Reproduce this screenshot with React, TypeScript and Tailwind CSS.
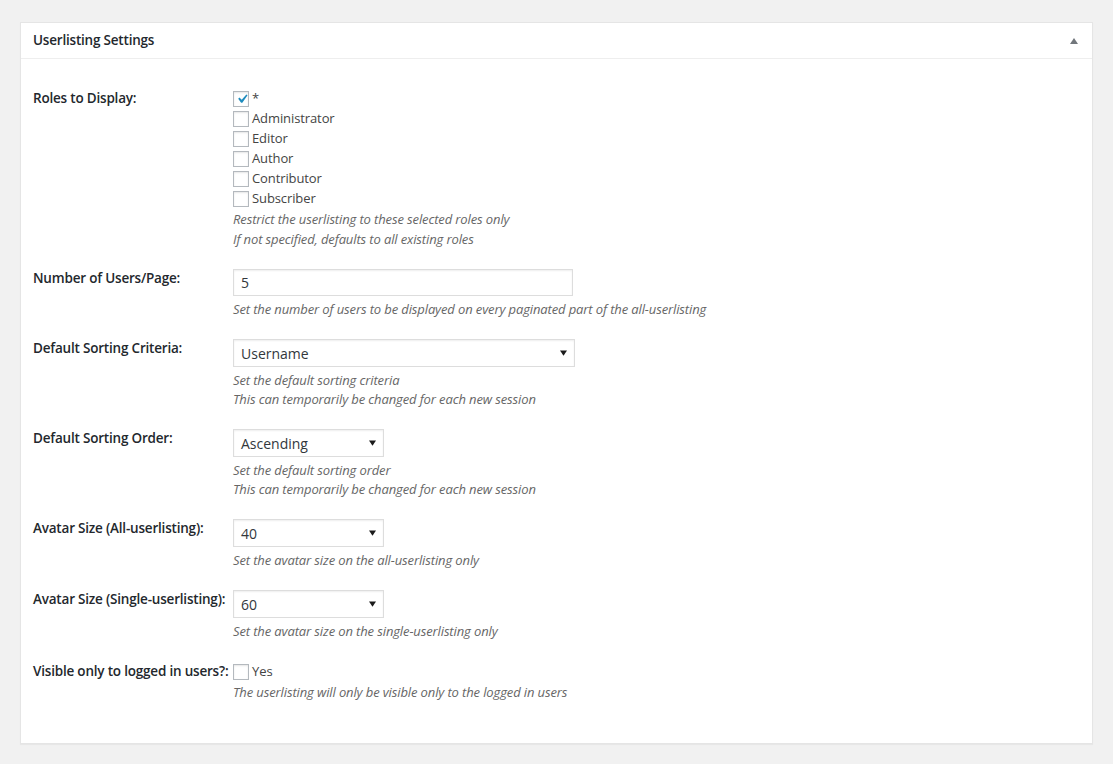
const font = { fontFamily: '"Open Sans", "Noto Sans", sans-serif' };

function Checkbox({ checked = false }: { checked?: boolean }) {
  return (
    <span className="relative inline-flex h-4 w-4 shrink-0 items-center justify-center border border-[#b4b9be] bg-white shadow-[inset_0_1px_2px_rgba(0,0,0,0.1)]">
      {checked && (
        <svg viewBox="0 0 20 20" className="absolute -left-[1px] -top-[2px] h-[18px] w-[18px]">
          <path d="M14.83 4.89l1.34.94-5.81 8.38H9.02L5.78 9.67l1.34-1.25 2.57 2.4z" fill="#1e8cbe" />
        </svg>
      )}
    </span>
  );
}

function Select({ value, wide = false }: { value: string; wide?: boolean }) {
  return (
    <div
      className={`flex h-[28px] items-center justify-between border border-[#ddd] bg-white pl-[7px] pr-[7px] text-[14px] text-[#32373c] shadow-[inset_0_1px_2px_rgba(0,0,0,0.07)] ${
        wide ? 'w-[342px]' : 'w-[151px]'
      }`}
    >
      <span>{value}</span>
      <svg viewBox="0 0 8 6" className="h-[6px] w-[7px]">
        <path d="M0 0h8L4 6z" fill="#1b1b1b" />
      </svg>
    </div>
  );
}

function Desc({ children, tall = false }: { children: React.ReactNode; tall?: boolean }) {
  return (
    <p className={`text-[13px] italic tracking-[-0.12px] text-[#666] ${tall ? 'leading-[20px]' : 'leading-[19px]'}`}>
      {children}
    </p>
  );
}

function Row({ label, children, pad = 'pt-[20px]' }: { label: string; children: React.ReactNode; pad?: string }) {
  return (
    <div className={`flex ${pad}`}>
      <div className="w-[200px] shrink-0 -mt-[1px] text-[13.5px] font-semibold leading-[20px] tracking-[-0.2px] text-[#23282d]">
        {label}
      </div>
      <div className="flex flex-col">{children}</div>
    </div>
  );
}

const roles = ['Administrator', 'Editor', 'Author', 'Contributor', 'Subscriber'];

export default function App() {
  return (
    <div className="min-h-[764px] bg-[#f1f1f1] pl-[20px] pr-[20px] pt-[22px]" style={font}>
      <div className="border border-[#e5e5e5] bg-white shadow-[0_1px_1px_rgba(0,0,0,0.04)]">
        <div className="flex h-[36px] items-center justify-between border-b border-[#eee] pl-[12px] pr-[12px]">
          <h2 className="text-[13.5px] font-semibold tracking-[-0.2px] text-[#23282d]">Userlisting Settings</h2>
          <svg viewBox="0 0 8 6" className="mr-[2px] h-[6px] w-[8px]">
            <path d="M4 0l4 6H0z" fill="#72777c" />
          </svg>
        </div>
        <div className="pb-[41px] pl-[12px] pr-[12px] text-[13px] text-[#444]">
          <Row label="Roles to Display:" pad="pt-[30px]">
            <label className="flex h-[20px] items-center gap-[3px]">
              <Checkbox checked />
              <span className="text-[13px] text-[#444]">*</span>
            </label>
            {roles.map((r) => (
              <label key={r} className="flex h-[20px] items-center gap-[3px]">
                <Checkbox />
                <span className="text-[13px] tracking-[-0.1px] text-[#444]">{r}</span>
              </label>
            ))}
            <Desc tall>Restrict the userlisting to these selected roles only</Desc>
            <Desc tall>If not specified, defaults to all existing roles</Desc>
          </Row>

          <Row label="Number of Users/Page:">
            <div className="flex h-[27px] w-[340px] items-center border border-[#ddd] bg-white pl-[7px] text-[14px] text-[#32373c] shadow-[inset_0_1px_2px_rgba(0,0,0,0.07)]">
              5
            </div>
            <div className="pt-[4px]">
              <Desc>Set the number of users to be displayed on every paginated part of the all-userlisting</Desc>
            </div>
          </Row>

          <Row label="Default Sorting Criteria:">
            <Select value="Username" wide />
            <div className="pt-[4px]">
              <Desc>Set the default sorting criteria</Desc>
              <Desc>This can temporarily be changed for each new session</Desc>
            </div>
          </Row>

          <Row label="Default Sorting Order:">
            <Select value="Ascending" />
            <div className="pt-[4px]">
              <Desc>Set the default sorting order</Desc>
              <Desc>This can temporarily be changed for each new session</Desc>
            </div>
          </Row>

          <Row label="Avatar Size (All-userlisting):">
            <Select value="40" />
            <div className="pt-[4px]">
              <Desc>Set the avatar size on the all-userlisting only</Desc>
            </div>
          </Row>

          <Row label="Avatar Size (Single-userlisting):">
            <Select value="60" />
            <div className="pt-[4px]">
              <Desc>Set the avatar size on the single-userlisting only</Desc>
            </div>
          </Row>

          <Row label="Visible only to logged in users?:" pad="pt-[21px]">
            <label className="flex h-[20px] items-center gap-[3px]">
              <Checkbox />
              <span className="text-[13px] text-[#444]">Yes</span>
            </label>
            <div className="pt-[1px]">
              <Desc>The userlisting will only be visible only to the logged in users</Desc>
            </div>
          </Row>
        </div>
      </div>
    </div>
  );
}
